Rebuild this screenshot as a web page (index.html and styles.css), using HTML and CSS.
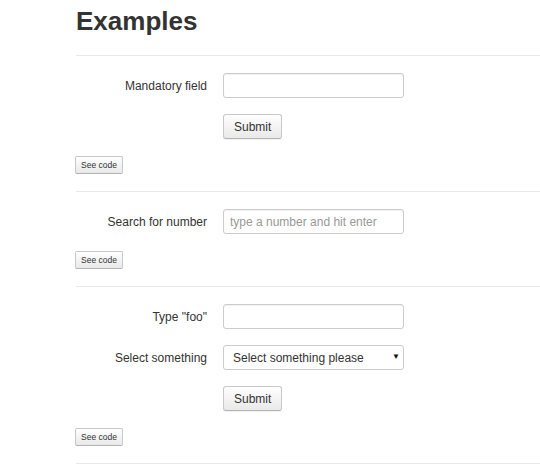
FILE: index.html
```html
<!DOCTYPE html>
<html lang="en">
<head>
  <meta charset="UTF-8">
  <title>Examples</title>
  <link rel="stylesheet" href="styles.css">
</head>
<body>
  <div id="page">
    <h1>Examples</h1>

    <div class="example">
      <form class="form">
        <label class="label">Mandatory field</label>
        <input type="text" class="field">
        <div></div>
        <div><button type="button" class="btn">Submit</button></div>
      </form>
      <button type="button" class="code">See code</button>
    </div>

    <div class="example">
      <form class="form">
        <label class="label">Search for number</label>
        <input type="text" class="field" placeholder="type a number and hit enter">
      </form>
      <button type="button" class="code">See code</button>
    </div>

    <div class="example last">
      <form class="form">
        <label class="label">Type "foo"</label>
        <input type="text" class="field">
        <label class="label">Select something</label>
        <div class="select-wrap">
          <select class="field select">
            <option>Select something please</option>
          </select>
        </div>
        <div></div>
        <div><button type="button" class="btn">Submit</button></div>
      </form>
      <button type="button" class="code">See code</button>
    </div>
  </div>
</body>
</html>
```

FILE: styles.css
```css
body {
  font-family: "Liberation Sans", Arial, sans-serif;
  margin: 0;
  color: #333;
  background: #fff;
}

#page {
  padding-left: 76px;
}

h1 {
  margin: 0;
  padding-top: 3px;
  font-size: 26px;
  line-height: 36px;
  font-weight: bold;
  color: #333;
}

.example {
  border-top: 1px solid #e8e8e8;
  padding: 17px 0 17px;
}

.example:first-of-type {
  margin-top: 16px;
}

.example.last {
  border-bottom: 1px solid #e8e8e8;
}

.form {
  display: grid;
  grid-template-columns: 131px 181px;
  column-gap: 16px;
  row-gap: 16px;
  align-items: center;
  margin: 0;
}

.label {
  text-align: right;
  font-size: 12px;
  color: #333;
}

.field {
  box-sizing: border-box;
  width: 181px;
  height: 25px;
  margin: 0;
  padding: 0 6px;
  border: 1px solid #ccc;
  border-radius: 3px;
  box-shadow: inset 0 1px 1px rgba(0, 0, 0, 0.06);
  font-family: "Liberation Sans", Arial, sans-serif;
  font-size: 12px;
  color: #555;
  background: #fff;
}

.field::placeholder {
  color: #999;
}

.select-wrap {
  position: relative;
  width: 181px;
}

.select {
  appearance: none;
  -webkit-appearance: none;
  padding-left: 9px;
  color: #333;
  box-shadow: none;
}

.select-wrap::after {
  content: "\25BC";
  position: absolute;
  right: 4px;
  top: 7px;
  font-size: 8px;
  color: #111;
  pointer-events: none;
}

.btn {
  box-sizing: border-box;
  height: 25px;
  padding: 0 10px;
  border: 1px solid #c8c8c8;
  border-bottom-color: #b3b3b3;
  border-radius: 3px;
  background: linear-gradient(#ffffff, #e9e9e9);
  box-shadow: 0 1px 1px rgba(0, 0, 0, 0.06);
  font-family: "Liberation Sans", Arial, sans-serif;
  font-size: 12px;
  color: #333;
  cursor: pointer;
}

.code {
  display: block;
  box-sizing: border-box;
  height: 18px;
  margin: 17px 0 0 -1px;
  padding: 0 5px;
  border: 1px solid #c8c8c8;
  border-bottom-color: #b3b3b3;
  border-radius: 2px;
  background: linear-gradient(#ffffff, #e9e9e9);
  font-family: "Liberation Sans", Arial, sans-serif;
  font-size: 8.5px;
  color: #333;
  cursor: pointer;
}
```
